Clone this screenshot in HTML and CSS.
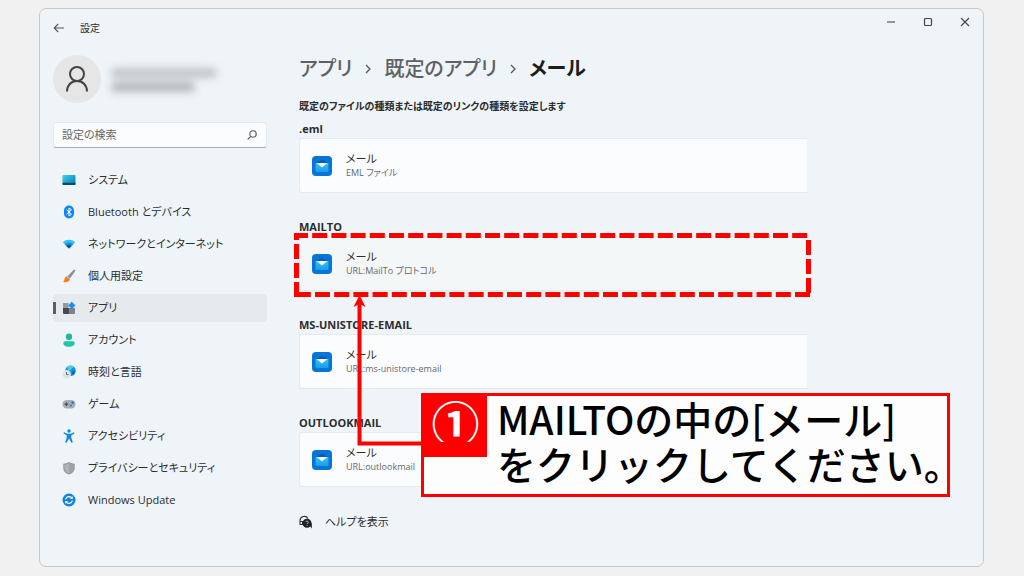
FILE: index.html
```html
<!DOCTYPE html>
<html lang="ja">
<head>
    <meta charset="UTF-8">
    <meta name="viewport" content="width=device-width, initial-scale=1.0">
    <title>設定</title>
    <link rel="stylesheet" href="styles.css">
</head>
<body>

    <div class="window">
        <header class="titlebar">
            <button class="back" aria-label="戻る">
                <svg width="12" height="10" viewBox="0 0 12 10"><path d="M11 5H1.5M5.2 1L1.2 5l4 4" fill="none" stroke="#555" stroke-width="1.1"/></svg>
            </button>
            <span class="title">設定</span>
            <div class="window-buttons">
                <button aria-label="最小化"><svg width="10" height="10" viewBox="0 0 10 10"><path d="M1 5h8" stroke="#555" stroke-width="1.2"/></svg></button>
                <button aria-label="最大化"><svg width="10" height="10" viewBox="0 0 10 10"><rect x="1.5" y="1.5" width="7" height="7" rx="1" fill="none" stroke="#444" stroke-width="1.2"/></svg></button>
                <button aria-label="閉じる"><svg width="10" height="10" viewBox="0 0 10 10"><path d="M1 1l8 8M9 1L1 9" stroke="#444" stroke-width="1.1"/></svg></button>
            </div>
        </header>

        <div class="content">
            <aside class="sidebar">
                <div class="profile">
                    <div class="avatar">
                        <svg width="24" height="28" viewBox="0 0 24 28" fill="none" stroke="#444" stroke-width="2"><circle cx="12" cy="9" r="7"/><path d="M2 26.500c0-6 4-10.500 10-10.500s10 4.500 10 10.500"/></svg>
                    </div>
                    <div class="account">
                        <div class="account-name"></div>
                        <div class="account-mail"></div>
                    </div>
                </div>

                <form class="search">
                    <input type="search" placeholder="設定の検索" aria-label="設定の検索">
                    <svg width="10" height="10" viewBox="0 0 10 10" fill="none" stroke="#555" stroke-width="1.1"><circle cx="6" cy="4" r="3.200"/><path d="M3.700 6.300L.7 9.300"/></svg>
                </form>

                <nav>
                    <a href="#">
                        <svg width="14" height="14" viewBox="0 0 14 14">
                            <defs><linearGradient id="sys" x1="0" y1="0" x2="1" y2="1"><stop offset="0" stop-color="#3cd3e6"/><stop offset="1" stop-color="#0878bd"/></linearGradient></defs>
                            <rect x=".5" y="2" width="13" height="10" rx="1" fill="url(#sys)"/><path d="M.5 9.800h13V11a1 1 0 0 1-1 1h-11a1 1 0 0 1-1-1z" fill="#0d4a6b"/>
                        </svg>
                        システム
                    </a>
                    <a href="#">
                        <svg width="14" height="14" viewBox="0 0 14 14"><rect x="2" y=".5" width="10" height="13" rx="5" fill="#0a84ff"/><path d="M4.500 4.700l5 4.600L7 11V3l2.500 1.700-5 4.600" fill="none" stroke="#fff" stroke-width="1"/></svg>
                        Bluetooth とデバイス
                    </a>
                    <a href="#">
                        <svg width="14" height="14" viewBox="0 0 14 14">
                            <path d="M.8 5.300C4 2 10 2 13.200 5.300L7 11.500z" fill="#35c3f3"/><path d="M2.600 7.100C5 4.900 9 4.900 11.400 7.100L7 11.500z" fill="#1792e0"/><path d="M4.400 8.900C6 7.500 8 7.500 9.600 8.900L7 11.500z" fill="#0b55a5"/>
                        </svg>
                        ネットワークとインターネット
                    </a>
                    <a href="#">
                        <svg width="14" height="14" viewBox="0 0 14 14">
                            <path d="M12.800.8c.6.4.6.9.3 1.400L8 9.500 5.600 7.300 11.500 1c.4-.4.9-.5 1.300-.2z" fill="#88929c"/><path d="M5.600 7.300L8 9.500c.2 3-3.500 4.200-7.300 3.600 1.600-.7 1.400-1.700 1.800-3.200.4-1.600 1.500-2.500 3.100-2.600z" fill="#f3801f"/><path d="M5.600 7.300L8 9.500l-.5 1-2.800-3z" fill="#e8c79a"/>
                        </svg>
                        個人用設定
                    </a>
                    <a href="#" class="active">
                        <svg width="14" height="14" viewBox="0 0 14 14">
                            <path d="M1 2h5.500v5H1z" fill="#9299a1"/><path d="M1 7h6v6H2a1 1 0 0 1-1-1z" fill="#454c54"/><path d="M7 7h6v5a1 1 0 0 1-1 1H7z" fill="#7c848d"/><path d="M9.800.8l3.600 3.600-3.600 3.600-3.600-3.600z" fill="#1690e8"/>
                        </svg>
                        アプリ
                    </a>
                    <a href="#">
                        <svg width="14" height="14" viewBox="0 0 14 14"><circle cx="7" cy="3.800" r="3.200" fill="#1cb99c"/><path d="M3 8.200h8a1.700 1.700 0 0 1 1.700 1.700c0 2.500-2.400 3.800-5.700 3.800s-5.700-1.300-5.700-3.800A1.700 1.700 0 0 1 3 8.200z" fill="#24c3a5"/></svg>
                        アカウント
                    </a>
                    <a href="#">
                        <svg width="14" height="14" viewBox="0 0 14 14">
                            <circle cx="8.500" cy="5.800" r="5.200" fill="#0b93dc"/><path d="M5 2c2-1.600 5-1.600 6.500.2-.7 1.600-2 1-2.400 2.600-.4 1.300-1.600.7-3.100.2z" fill="#48cdea"/><path d="M10 7l3-1.500c0 2-.8 3.500-2 4.500z" fill="#0b5cad"/><circle cx="4.700" cy="9.300" r="4.200" fill="#dfe3e6"/><path d="M4.500 7v2.600h2" fill="none" stroke="#555c63" stroke-width=".9"/>
                        </svg>
                        時刻と言語
                    </a>
                    <a href="#">
                        <svg width="14" height="14" viewBox="0 0 14 14">
                            <rect x=".5" y="3" width="13" height="8.500" rx="4.200" fill="#a5adb5"/><path d="M2.600 7.200h3.600M4.400 5.400V9" stroke="#434b53" stroke-width="1.200"/><circle cx="10.600" cy="5.700" r="1.100" fill="#1268b8"/><circle cx="8.900" cy="8.500" r="1.100" fill="#1580d8"/>
                        </svg>
                        ゲーム
                    </a>
                    <a href="#">
                        <svg width="14" height="14" viewBox="0 0 14 14"><circle cx="7" cy="2" r="1.700" fill="#1287df"/><path d="M2 3.300l3.400 1.400h3.200L12 3.300l.5 1.300-3.200 1.600v2.500l1.500 4.500-1.400.5L7 9.500l-2.400 4.200-1.400-.5 1.500-4.500V6.200L1.500 4.600z" fill="#1287df"/></svg>
                        アクセシビリティ
                    </a>
                    <a href="#">
                        <svg width="14" height="14" viewBox="0 0 14 14"><path d="M7 1c1.700 1.200 3.500 1.700 5.700 1.700v4c0 3.500-2.300 5.500-5.700 6.800C3.600 12.200 1.300 10.200 1.300 6.700v-4C3.500 2.700 5.300 2.200 7 1z" fill="#8c9298"/><path d="M7 2.200c1.400.9 3 1.400 4.700 1.500v3c0 2.900-1.900 4.600-4.700 5.700C4.200 11.300 2.300 9.600 2.300 6.700v-3C4 3.600 5.600 3.100 7 2.200z" fill="#aeb3b7"/><path d="M7 2.200v10.200c2.800-1.100 4.700-2.800 4.700-5.700v-3C10 3.600 8.400 3.100 7 2.200z" fill="#9da2a7"/></svg>
                        プライバシーとセキュリティ
                    </a>
                    <a href="#">
                        <svg width="14" height="14" viewBox="0 0 14 14"><circle cx="7" cy="7" r="6.500" fill="#1184dc"/><path d="M3.600 6.300a3.500 3.500 0 0 1 6.400-1M10.400 7.700a3.500 3.500 0 0 1-6.400 1" fill="none" stroke="#fff" stroke-width="1.200"/><path d="M10.700 3.200v2.700H8zM3.300 10.800V8.100H6z" fill="#fff"/></svg>
                        Windows Update
                    </a>
                </nav>
            </aside>

            <main>
                <h1>
                    <a href="#">アプリ</a>
                    <svg width="6" height="10" viewBox="0 0 6 10"><path d="M1 1l4 4-4 4" fill="none" stroke="#555" stroke-width="1.300"/></svg>
                    <a href="#">既定のアプリ</a>
                    <svg width="6" height="10" viewBox="0 0 6 10"><path d="M1 1l4 4-4 4" fill="none" stroke="#555" stroke-width="1.300"/></svg>
                    <span>メール</span>
                </h1>
                <p class="description">既定のファイルの種類または既定のリンクの種類を設定します</p>

                <section>
                    <h2>.eml</h2>
                    <button class="card">
                        <svg width="20" height="20" viewBox="0 0 20 20">
                            <defs><linearGradient id="mail" x1="0" y1="0" x2="0" y2="1"><stop offset="0" stop-color="#35c2f5"/><stop offset="1" stop-color="#1c9ce8"/></linearGradient></defs>
                            <rect width="20" height="20" rx="4" fill="#0675d6"/><path d="M3.500 7.500L10 3.500l6.500 4v3h-13z" fill="#0b5cb0"/><path d="M3.500 7h13v8a1 1 0 0 1-1 1h-11a1 1 0 0 1-1-1z" fill="url(#mail)"/><path d="M4.500 7h11L10 11.500z" fill="#f4f8fb"/>
                        </svg>
                        <span class="card-text"><span>メール</span><small>EML ファイル</small></span>
                    </button>
                </section>

                <section class="target">
                    <h2>MAILTO</h2>
                    <button class="card hover">
                        <svg width="20" height="20" viewBox="0 0 20 20"><rect width="20" height="20" rx="4" fill="#0675d6"/><path d="M3.500 7.500L10 3.500l6.500 4v3h-13z" fill="#0b5cb0"/><path d="M3.500 7h13v8a1 1 0 0 1-1 1h-11a1 1 0 0 1-1-1z" fill="url(#mail)"/><path d="M4.500 7h11L10 11.500z" fill="#f4f8fb"/></svg>
                        <span class="card-text"><span>メール</span><small>URL:MailTo プロトコル</small></span>
                    </button>

                    <!-- 枠と矢印 -->
                    <svg class="marker" width="518" height="214" viewBox="0 0 518 214" fill="none" stroke="#f00">
                        <path d="M0 2.500H516" stroke-width="5" stroke-dasharray="15 4.200" stroke-dashoffset="1"/>
                        <path d="M514.500 7V64" stroke-width="5" stroke-dasharray="15 4"/>
                        <path d="M516 61.500H3" stroke-width="5" stroke-dasharray="15 4.200"/>
                        <path d="M2.500 64V5" stroke-width="5" stroke-dasharray="15 4"/>
                        <path d="M65.500 70V210.500H130" stroke-width="4"/>
                        <path d="M65.500 62l6 12-6-3-6 3z" fill="#f00" stroke="none"/>
                    </svg>

                    <div class="callout">
                        <span class="number"><b>①</b></span>
                        <p>MAILTOの中の[メール]<br>をクリックしてください。</p>
                    </div>
                </section>

                <section>
                    <h2>MS-UNISTORE-EMAIL</h2>
                    <button class="card">
                        <svg width="20" height="20" viewBox="0 0 20 20"><rect width="20" height="20" rx="4" fill="#0675d6"/><path d="M3.500 7.500L10 3.500l6.500 4v3h-13z" fill="#0b5cb0"/><path d="M3.500 7h13v8a1 1 0 0 1-1 1h-11a1 1 0 0 1-1-1z" fill="url(#mail)"/><path d="M4.500 7h11L10 11.500z" fill="#f4f8fb"/></svg>
                        <span class="card-text"><span>メール</span><small>URL:ms-unistore-email</small></span>
                    </button>
                </section>

                <section>
                    <h2>OUTLOOKMAIL</h2>
                    <button class="card">
                        <svg width="20" height="20" viewBox="0 0 20 20"><rect width="20" height="20" rx="4" fill="#0675d6"/><path d="M3.500 7.500L10 3.500l6.500 4v3h-13z" fill="#0b5cb0"/><path d="M3.500 7h13v8a1 1 0 0 1-1 1h-11a1 1 0 0 1-1-1z" fill="url(#mail)"/><path d="M4.500 7h11L10 11.500z" fill="#f4f8fb"/></svg>
                        <span class="card-text"><span>メール</span><small>URL:outlookmail</small></span>
                    </button>
                </section>

                <a href="#" class="help">
                    <svg width="14" height="14" viewBox="0 0 14 14"><path d="M1 9.500V5.500a4.300 4.300 0 0 1 8-2M.5 9.500h3V6.500H1" fill="none" stroke="#333" stroke-width="1.100"/><circle cx="8" cy="8.200" r="4.500" fill="#222"/><path d="M10 10l2.800 3.500V8z" fill="#222"/><path d="M6.900 7.200c0-1.500 2.300-1.500 2.300 0 0 .8-1.100.9-1.100 1.900M8.100 10v.9" fill="none" stroke="#c8cccf" stroke-width=".8"/></svg>
                    ヘルプを表示
                </a>
            </main>
        </div>
    </div>

</body>
</html>
```
FILE: styles.css
```css
/* Basis */
* {
    box-sizing: border-box;
}

body {
    display: flex;
    min-height: 100vh;
    margin: 0;
    padding: 8px 40px 9px 39px;
    background-color: #f1f1f1;
    color: #2b2d2f;
    font-family: "Open Sans", "Noto Sans CJK JP", sans-serif;
    font-size: 12px;
    line-height: 16px;
    font-feature-settings: "palt";
}

a {
    color: inherit;
    text-decoration: none;
}

button {
    border: 0;
    padding: 0;
    background: none;
    color: inherit;
    font: inherit;
}

svg {
    flex: none;
}

.window {
    flex: 1;
    border: 1px solid #c6c9ca;
    border-radius: 7px;
    background-color: #eef4f7;
}

/* Titlebar */
.titlebar {
    display: flex;
    align-items: center;
    height: 38px;
    padding-left: 13px;
}

.back {
    display: flex;
    width: 27px;
}

.title {
    font-size: 10px;
}

.window-buttons {
    display: flex;
    align-self: flex-start;
    margin-left: auto;
}

.window-buttons button {
    display: flex;
    align-items: center;
    justify-content: center;
    width: 37px;
    height: 25px;
}

.content {
    display: flex;
    gap: 32px;
    padding: 8px 13px;
}

/* Sidebar */
.sidebar {
    flex: none;
    width: 214px;
}

.profile {
    display: flex;
    align-items: center;
    gap: 11px;
}

.avatar {
    display: flex;
    align-items: center;
    justify-content: center;
    width: 48px;
    height: 48px;
    border-radius: 50%;
    background-color: #e6e6e6;
}

.account {
    filter: blur(4px);
    padding-top: 2px;
}

.account-name,
.account-mail {
    width: 104px;
    height: 8px;
    background-color: #b4babd;
}

.account-mail {
    width: 82px;
    margin-top: 6px;
    background-color: #a3a9ac;
}

.search {
    display: flex;
    align-items: center;
    height: 26px;
    margin: 19px 0 18px;
    padding: 0 9px 0 8px;
    border: 1px solid #e4e9eb;
    border-bottom: 1px solid #a5aeae;
    border-radius: 3px;
    background-color: #fbfcfe;
}

.search input {
    flex: 1;
    min-width: 0;
    border: 0;
    padding: 0;
    background: none;
    font: inherit;
    outline: none;
}

.search input::placeholder {
    color: #666;
    font-size: 11px;
}

nav {
    display: flex;
    flex-direction: column;
    gap: 4px;
}

nav a {
    display: flex;
    align-items: center;
    gap: 12px;
    height: 28px;
    padding-left: 9px;
    border-radius: 4px;
    font-size: 11px;
}

nav .active {
    padding-left: 6px;
    border-left: 3px solid #5d6062;
    border-image: linear-gradient(transparent 8px, #5d6062 8px, #5d6062 20px, transparent 20px) 0 0 0 3;
    background-color: #e6eaed;
}

/* Main */
main {
    flex: 1;
    max-width: 508px;
}

h1 {
    display: flex;
    align-items: center;
    gap: 13px;
    height: 28px;
    margin: 0 0 15px;
    font-size: 20px;
    font-weight: 500;
    color: #5f6264;
}

h1 span {
    color: #1c1c1c;
    font-weight: 700;
}

.description {
    margin: 0 0 6px;
    font-size: 10px;
    font-weight: 700;
}

h2 {
    height: 18px;
    margin: 0;
    font-size: 11px;
    line-height: 18px;
    font-weight: 700;
}

section {
    margin-bottom: 25px;
}

.card {
    display: flex;
    align-items: center;
    gap: 14px;
    width: 100%;
    height: 55px;
    padding: 0 12px;
    border: 1px solid #e5eaec;
    border-right: 0;
    border-radius: 3px 0 0 3px;
    background-color: #fbfcfe;
    text-align: left;
}

.card.hover {
    background-color: #f4f7f8;
}

.card-text {
    display: flex;
    flex-direction: column;
    font-size: 11px;
    line-height: 14px;
}

.card-text small {
    color: #65686a;
    font-size: 9px;
}

.help {
    display: flex;
    align-items: center;
    gap: 12px;
    padding-top: 2px;
    font-size: 11px;
}

/* Marker + callout */
.target {
    position: relative;
}

.marker {
    position: absolute;
    top: 15px;
    left: -5px;
    z-index: 1;
}

.callout {
    position: absolute;
    top: 175px;
    left: 122px;
    z-index: 2;
    display: flex;
    gap: 10px;
    width: 529px;
    height: 104px;
    border: 3px solid #f00;
    background-color: #fdfdfe;
}

.number {
    flex: none;
    width: 63px;
    height: 61px;
    background-color: #f00;
    color: #fff;
    font-family: "Noto Sans CJK JP", sans-serif;
    font-size: 48px;
    line-height: 50px;
    text-align: center;
}

.number b {
    display: block;
    height: 46px;
    overflow: hidden;
}

.callout p {
    margin: 0;
    color: #000;
    font-family: "Noto Sans CJK JP", sans-serif;
    font-size: 39px;
    line-height: 45px;
    font-weight: 500;
    font-feature-settings: normal;
    white-space: nowrap;
}
```
